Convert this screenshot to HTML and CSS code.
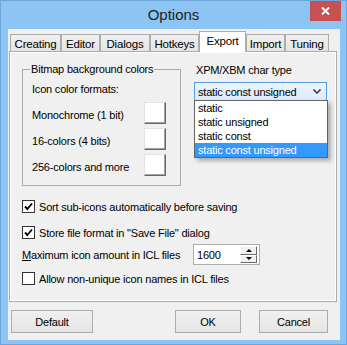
FILE: index.html
```html
<!DOCTYPE html>
<html>
    <head>
        <meta charset="utf-8">
        <meta name="viewport" content="width=device-width, initial-scale=1.0">
        <title>Options</title>

        <link rel="stylesheet" href="styles.css">
    </head>
    <body>
        <div class="window">
            <div class="titlebar">
                <span class="title">Options</span>
                <span class="close-btn">
                    <svg width="9" height="8" viewBox="0 0 9 8"><path d="M1 0.5 L8 7.5 M8 0.5 L1 7.5" stroke="#fff" stroke-width="2"/></svg>
                </span>
            </div>
            <div class="client">
                <div class="tabs">
                    <div class="tab" style="width: 51px">Creating</div>
                    <div class="tab" style="width: 39px">Editor</div>
                    <div class="tab" style="width: 50px">Dialogs</div>
                    <div class="tab" style="width: 49px">Hotkeys</div>
                    <div class="tab tab--active" style="width: 47px">Export</div>
                    <div class="tab" style="width: 39px">Import</div>
                    <div class="tab" style="width: 44px">Tuning</div>
                </div>
                <div class="page">
                    <div class="page-top">
                        <fieldset class="group">
                            <legend>Bitmap background colors</legend>
                            <div class="group-caption">Icon color formats:</div>
                            <div class="color-row">
                                <span>Monochrome (1 bit)</span>
                                <span class="color-btn"></span>
                            </div>
                            <div class="color-row">
                                <span>16-colors (4 bits)</span>
                                <span class="color-btn"></span>
                            </div>
                            <div class="color-row">
                                <span>256-colors and more</span>
                                <span class="color-btn"></span>
                            </div>
                        </fieldset>
                        <div class="chartype">
                            <div class="chartype-label">XPM/XBM char type</div>
                            <div class="combo">
                                <span>static const unsigned</span>
                                <svg width="8" height="5" viewBox="0 0 8 5"><path d="M0.5 0.5 L4 4 L7.5 0.5" fill="none" stroke="#444" stroke-width="1.6"/></svg>
                            </div>
                            <ul class="combo-list">
                                <li>static</li>
                                <li>static unsigned</li>
                                <li>static const</li>
                                <li class="selected">static const unsigned</li>
                            </ul>
                        </div>
                    </div>

                    <div class="check-row check-row--first">
                        <span class="checkbox">
                            <svg width="11" height="11" viewBox="0 0 11 11"><path d="M2 5.5 L4.3 8 L9 2.5" fill="none" stroke="#000" stroke-width="1.9"/></svg>
                        </span>
                        <span>Sort sub-icons automatically before saving</span>
                    </div>
                    <div class="check-row">
                        <span class="checkbox">
                            <svg width="11" height="11" viewBox="0 0 11 11"><path d="M2 5.5 L4.3 8 L9 2.5" fill="none" stroke="#000" stroke-width="1.9"/></svg>
                        </span>
                        <span>Store file format in "Save File" dialog</span>
                    </div>
                    <div class="spin-row">
                        <span class="spin-label"><u>M</u>aximum icon amount in ICL files</span>
                        <div class="spin">
                            <span class="spin-value">1600</span>
                            <div class="spin-buttons">
                                <span class="spin-btn"><span class="arrow-up"></span></span>
                                <span class="spin-btn"><span class="arrow-down"></span></span>
                            </div>
                        </div>
                    </div>
                    <div class="check-row check-row--last">
                        <span class="checkbox"></span>
                        <span>Allow non-unique icon names in ICL files</span>
                    </div>
                </div>
                <div class="buttons">
                    <button type="button" class="btn btn--default">Default</button>
                    <span class="spacer"></span>
                    <button type="button" class="btn btn--ok">OK</button>
                    <button type="button" class="btn btn--cancel">Cancel</button>
                </div>
            </div>
        </div>
    </body>
</html>
```

FILE: styles.css
```css
:root {
    --frame: rgb(140, 196, 244);
    --face: rgb(240, 240, 240);
    --edge: rgb(172, 172, 172);
    --hl: rgb(51, 153, 255);
}

body {
    margin: 0;
    font-family: "Liberation Sans", Arial, sans-serif;
    font-size: 11px;
    letter-spacing: -0.2px;
    color: #000;
}

.window {
    width: 347px;
    height: 345px;
    box-sizing: border-box;
    background-color: var(--frame);
    border: 1px solid rgb(110, 164, 218);
    display: flex;
    flex-direction: column;
}

.titlebar {
    height: 28px;
    display: grid;
    grid-template-columns: 1fr auto 1fr;
    align-items: start;
}

.title {
    grid-column: 2;
    font-size: 15px;
    line-height: 28px;
    letter-spacing: 0;
    color: rgb(30, 30, 30);
}

.close-btn {
    grid-column: 3;
    justify-self: end;
    width: 31px;
    height: 20px;
    margin-right: 5px;
    background-color: rgb(199, 80, 80);
    display: flex;
    align-items: center;
    justify-content: center;
}

.client {
    margin-left: 7px;
    width: 332px;
    height: 311px;
    box-sizing: border-box;
    background-color: var(--face);
    padding: 2px 3px 0 1px;
    display: flex;
    flex-direction: column;
}

/* tabs */

.tabs {
    height: 21px;
    margin-bottom: -1px;
    padding-left: 1px;
    display: flex;
    align-items: flex-end;
    position: relative;
    z-index: 1;
}

.tab {
    height: 17px;
    margin-bottom: 1px;
    box-sizing: border-box;
    border: 1px solid var(--edge);
    border-bottom: none;
    background: linear-gradient(rgb(240, 240, 240), rgb(229, 229, 229));
    display: flex;
    align-items: center;
    justify-content: center;
    padding-top: 1px;
    font-size: 11.5px;
}

.tab--active {
    height: 21px;
    margin-bottom: 0;
    background: #fff;
    padding-top: 0;
    padding-bottom: 2px;
}

.page {
    height: 251px;
    box-sizing: border-box;
    border: 1px solid var(--edge);
    box-shadow: inset 0 0 0 1px #fff;
    padding: 11px 0 0 12px;
    position: relative;
}

.page-top {
    display: flex;
    align-items: flex-start;
}

/* group box */

.group {
    width: 159px;
    min-width: 0;
    box-sizing: border-box;
    margin: 0;
    padding: 0 14px 9px 9px;
    border: 1px solid rgb(170, 170, 170);
}

.group legend {
    padding: 0 1px;
    margin-left: -2px;
    line-height: 13px;
}

.group-caption {
    line-height: 13px;
    margin-top: 7px;
}

.color-row {
    height: 22px;
    margin-top: 4px;
    display: flex;
    align-items: center;
    justify-content: space-between;
}

.group-caption + .color-row {
    margin-top: 6px;
}

.color-row span:first-child {
    padding-top: 3px;
}

.color-btn {
    width: 22px;
    height: 22px;
    box-sizing: border-box;
    background-color: #fff;
    border: 1px solid;
    border-color: rgb(227, 227, 227) rgb(105, 105, 105) rgb(105, 105, 105) rgb(227, 227, 227);
    box-shadow: inset -1px -1px 0 rgb(160, 160, 160);
}

/* char type combo */

.chartype {
    margin-left: 13px;
    margin-top: 1px;
    position: relative;
}

.chartype-label {
    line-height: 13px;
    padding-left: 2px;
}

.combo {
    width: 133px;
    height: 19px;
    margin-top: 5px;
    box-sizing: border-box;
    border: 1px solid rgb(86, 157, 229);
    background: linear-gradient(rgb(236, 244, 252), rgb(220, 236, 252));
    padding: 0 5px 0 3px;
    display: flex;
    align-items: center;
    justify-content: space-between;
}

.combo-list {
    position: absolute;
    top: calc(100% - 1px);
    left: 0;
    width: 134px;
    box-sizing: border-box;
    margin: 0;
    padding: 0;
    list-style: none;
    background-color: #fff;
    border: 1px solid rgb(100, 100, 100);
    box-shadow: 3px 3px 4px rgba(0, 0, 0, 0.28);
}

.combo-list li {
    height: 14px;
    line-height: 14px;
    padding-left: 3px;
}

.combo-list .selected {
    background-color: var(--hl);
    color: #fff;
}

/* checkboxes and spin edit */

.check-row {
    height: 13px;
    margin-top: 13px;
    display: flex;
    align-items: center;
}

.check-row--first {
    margin-top: 14px;
}

.check-row--last {
    margin-top: 7px;
}

.checkbox {
    width: 13px;
    height: 13px;
    box-sizing: border-box;
    border: 1px solid rgb(51, 51, 51);
    background-color: #fff;
    margin-right: 4px;
    display: flex;
    align-items: center;
    justify-content: center;
}

.spin-row {
    height: 21px;
    margin-top: 5px;
    display: flex;
    align-items: center;
}

.spin-label {
    width: 171px;
    padding-top: 1px;
}

.spin {
    width: 67px;
    height: 21px;
    box-sizing: border-box;
    border: 1px solid rgb(171, 173, 179);
    background-color: #fff;
    padding: 1px 2px 1px 3px;
    display: flex;
    align-items: center;
    justify-content: space-between;
}

.spin-buttons {
    width: 17px;
    height: 17px;
    display: flex;
    flex-direction: column;
}

.spin-btn {
    flex: 1;
    box-sizing: border-box;
    background-color: var(--face);
    border: 1px solid;
    border-color: #fff rgb(105, 105, 105) rgb(105, 105, 105) #fff;
    display: flex;
    align-items: center;
    justify-content: center;
}

.arrow-up,
.arrow-down {
    width: 0;
    height: 0;
    border-left: 3px solid transparent;
    border-right: 3px solid transparent;
}

.arrow-up {
    border-bottom: 3px solid #000;
}

.arrow-down {
    border-top: 3px solid #000;
}

/* bottom buttons */

.buttons {
    height: 23px;
    margin-top: 8px;
    padding: 0 9px 0 2px;
    display: flex;
    gap: 18px;
}

.spacer {
    flex: 1;
}

.btn {
    height: 23px;
    box-sizing: border-box;
    border: 1px solid var(--edge);
    background: linear-gradient(rgb(240, 240, 240), rgb(229, 229, 229));
    font-family: "Liberation Sans", Arial, sans-serif;
    font-size: 11px;
    letter-spacing: -0.2px;
    color: #000;
    padding: 0;
}

.btn--default {
    width: 82px;
}

.btn--ok {
    width: 66px;
}

.btn--cancel {
    width: 69px;
}
```
